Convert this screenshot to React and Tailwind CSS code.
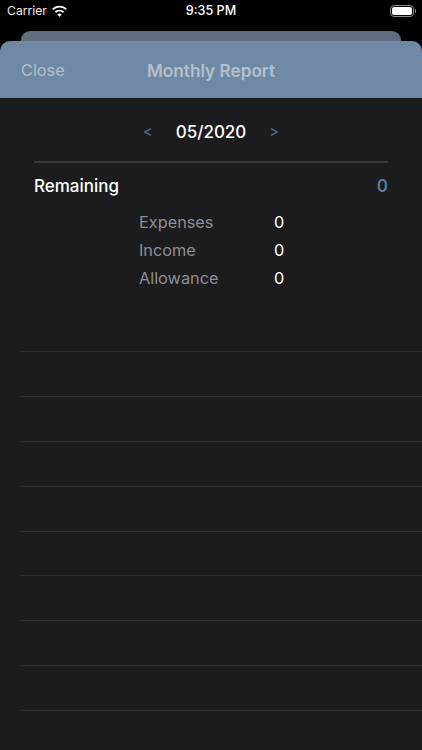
const rows = [
  { label: 'Expenses', value: '0' },
  { label: 'Income', value: '0' },
  { label: 'Allowance', value: '0' },
];

const emptyLines = [1, 2, 3, 4, 5, 6, 7, 8, 9];

const WifiIcon = () => (
  <svg width="17" height="13" viewBox="0 0 17 13" fill="#fff">
    <path d="M8.5 2.6c2.4 0 4.6.9 6.2 2.5l1.2-1.3C13.9 1.900 11.300.800 8.500.800S3.100 1.900 1.100 3.800l1.200 1.300C3.900 3.500 6.100 2.600 8.500 2.600z" />
    <path d="M8.500 6.500c1.300 0 2.500.5 3.500 1.400l1.200-1.300C11.900 5.400 10.300 4.700 8.500 4.700s-3.400.7-4.700 1.900L5 7.900c1-.9 2.200-1.400 3.500-1.400z" />
    <path d="M8.500 8.500c-.9 0-1.600.3-2.200.9l2.200 2.400 2.200-2.400c-.6-.6-1.300-.9-2.200-.9z" />
  </svg>
);

const BatteryIcon = () => (
  <div className="flex items-center gap-[1px]">
    <div className="w-[24px] h-[12px] rounded-[4px] border border-[#8a8a8a] p-[1px]">
      <div className="w-full h-full rounded-[2px] bg-white" />
    </div>
    <div className="w-[1px] h-[4px] rounded-r-sm bg-[#8a8a8a]" />
  </div>
);

const App = () => {
  return (
    <div className="w-[422px] h-[750px] overflow-hidden bg-black flex flex-col font-['Inter','Liberation_Sans',sans-serif]">
      <div className="h-[22px] flex items-center shrink-0 relative text-white text-[12.6px] leading-none">
        <div className="flex items-center gap-[4px] pl-[7px]">
          <span className="text-[12.2px] text-[#eeeeee]">Carrier</span>
          <WifiIcon />
        </div>
        <span className="absolute left-0 right-0 text-center font-medium">9:35 PM</span>
        <div className="ml-auto pr-[6px]">
          <BatteryIcon />
        </div>
      </div>

      <div className="h-[9px] shrink-0" />
      <div className="h-[10px] shrink-0 mx-[21px] rounded-t-[9px] bg-[#5f6d7f]" />

      <div className="flex-1 flex flex-col rounded-t-[10px] overflow-hidden bg-[#1c1c1e]">
        <div className="h-[57px] shrink-0 pt-[2px] bg-[#6f88a3] flex items-center relative">
          <span className="pl-[21px] text-[16.3px] text-[#b2bfcd]">Close</span>
          <span className="absolute left-0 right-0 text-center text-[17.2px] font-semibold text-[#b3c1d0]">Monthly Report</span>
        </div>

        <div className="h-[63px] shrink-0 pt-[6px] flex items-center justify-center">
          <span className="text-[15px] text-[#56718f] w-[8px] mr-[25px]">&lt;</span>
          <span className="mr-[23px] text-[17px] font-medium text-white">05/2020</span>
          <span className="text-[15px] text-[#56718f] w-[10px]">&gt;</span>
        </div>

        <div className="mx-[34px] h-[2px] shrink-0 bg-[#3a3a3c]" />

        <div className="mx-[34px] h-[45px] shrink-0 pt-[3px] flex items-center justify-between">
          <span className="text-[17px] font-medium text-white">Remaining</span>
          <span className="text-[17px] font-semibold text-[#5d7a99]">0</span>
        </div>

        <div className="flex flex-col pl-[139px]">
          {rows.map((row) => (
            <div key={row.label} className="h-[28px] flex items-center text-[16.3px]">
              <span className="w-[135px] text-[#8e8e93]">{row.label}</span>
              <span className="text-white">{row.value}</span>
            </div>
          ))}
        </div>

        <div className="flex flex-col pl-[21px] pt-[59px]">
          {emptyLines.map((n) => (
            <div key={n} className="h-[44.9px] shrink-0 border-t border-[#2c2c2e]" />
          ))}
        </div>
      </div>
    </div>
  );
};

export default App;
